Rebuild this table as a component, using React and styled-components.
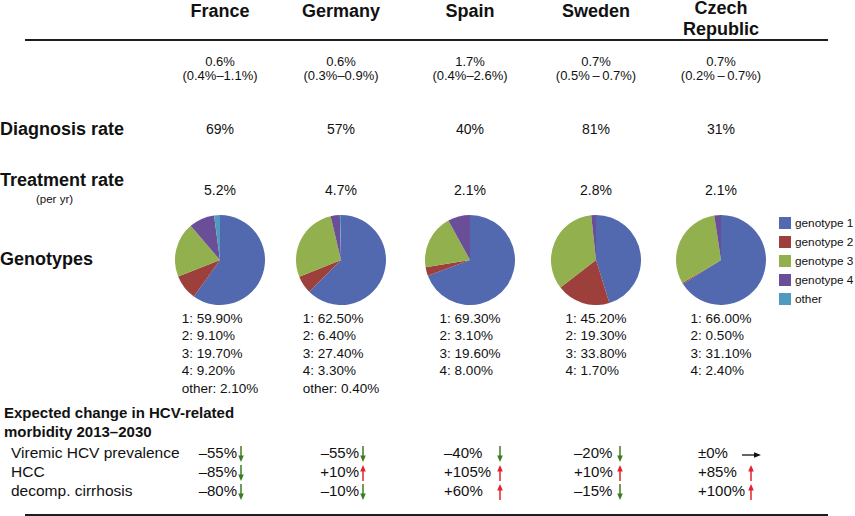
import React from "react";
import styled, { createGlobalStyle } from "styled-components";

const GlobalStyle = createGlobalStyle`
  html, body {
    margin: 0;
    padding: 0;
    background: #ffffff;
  }
  body {
    font-family: "Liberation Sans", Arial, sans-serif;
    color: #111;
  }
`;

const COLS = "158px 124px 118px 140px 112px 138px 1fr";

const COLORS = ["#5269af", "#9d403c", "#93b04e", "#6a4e97", "#4f9bc0"];

const Page = styled.div`
  width: 855px;
  height: 516px;
  overflow: hidden;
  display: flex;
  flex-direction: column;
`;

const Row = styled.div`
  display: grid;
  grid-template-columns: ${COLS};
  align-items: start;
  height: ${(p) => (p.$h ? `${p.$h}px` : "auto")};
  padding-top: ${(p) => p.$pt || 0}px;
  box-sizing: border-box;
`;

const CountryHead = styled.div`
  text-align: center;
  font-size: 18px;
  font-weight: bold;
  line-height: ${(p) => (p.$two ? "21px" : "22px")};
  margin-top: ${(p) => (p.$two ? "-2px" : "0")};
`;

const Rule = styled.div`
  height: ${(p) => p.$h || 2}px;
  margin: ${(p) => p.$mt || 0}px 27px 0 25px;
  background: #1e1e1e;
  flex-shrink: 0;
`;

const RowLabel = styled.div`
  font-size: 18px;
  font-weight: bold;
  line-height: 22px;
  padding-top: ${(p) => p.$pt || 0}px;
  white-space: nowrap;
`;

const SubNote = styled.div`
  font-size: 11.5px;
  font-weight: normal;
  line-height: 12px;
  margin-top: 2px;
  padding-left: 36px;
`;

const Value = styled.div`
  text-align: center;
  font-size: ${(p) => p.$fs || 14}px;
  line-height: ${(p) => p.$lh || 22}px;
  padding-top: ${(p) => p.$pt || 0}px;
  white-space: nowrap;
`;

const PieCell = styled.div`
  display: flex;
  flex-direction: column;
  align-items: center;
`;

const GenoList = styled.div`
  margin-top: 5px;
  font-size: 13.5px;
  line-height: 17.5px;
  text-align: left;
  white-space: nowrap;
`;

const Legend = styled.div`
  margin: -1.5px 0 0 -11px;
  display: flex;
  flex-direction: column;
`;

const LegendItem = styled.div`
  display: flex;
  align-items: center;
  gap: 4px;
  height: 19px;
  font-size: 11.8px;
  white-space: nowrap;
`;

const Swatch = styled.span`
  width: 12px;
  height: 12px;
  flex-shrink: 0;
  background: ${(p) => p.$c};
`;

const SectionTitle = styled.div`
  margin-top: 6px;
  padding-left: 4px;
  font-size: 15px;
  font-weight: bold;
  line-height: 19px;
`;

const ChangeBlock = styled.div`
  margin-top: 2px;
  display: flex;
  flex-direction: column;
`;

const ChangeRow = styled.div`
  display: grid;
  grid-template-columns: ${COLS};
  height: 19px;
  font-size: 15px;
  line-height: 19px;
`;

const ChangeLabel = styled.div`
  padding-left: 11px;
  font-size: 15.5px;
  white-space: nowrap;
`;

const ChangeCell = styled.div`
  display: flex;
  align-items: flex-start;
  padding-left: ${(p) => p.$pad}px;
`;

const ChangeVal = styled.span`
  width: ${(p) => p.$w}px;
  text-align: ${(p) => p.$align};
  white-space: nowrap;
`;

const ArrowSvg = styled.svg`
  flex-shrink: 0;
  margin-top: ${(p) => p.$mt}px;
  margin-left: ${(p) => p.$ml || 0}px;
`;

function Arrow({ dir }) {
  if (dir === "right") {
    return (
      <ArrowSvg width="20" height="8" viewBox="0 0 20 8" $mt={7.5} $ml={-5}>
        <line x1="0" y1="4" x2="14" y2="4" stroke="#111" strokeWidth="1.3" />
        <polygon points="12,1.2 19,4 12,6.8" fill="#111" />
      </ArrowSvg>
    );
  }
  const up = dir === "up";
  const color = up ? "#e3232b" : "#3d7d1f";
  return (
    <ArrowSvg width="8" height="16" viewBox="0 0 8 16" $mt={2.5}>
      {up ? (
        <>
          <line x1="4" y1="5" x2="4" y2="16" stroke={color} strokeWidth="1.5" />
          <polygon points="1.2,6.5 4,0 6.8,6.5" fill={color} />
        </>
      ) : (
        <>
          <line x1="4" y1="0" x2="4" y2="11" stroke={color} strokeWidth="1.5" />
          <polygon points="1.2,9.5 4,16 6.8,9.5" fill={color} />
        </>
      )}
    </ArrowSvg>
  );
}

function slicePath(c, r, f0, f1) {
  const a0 = f0 * Math.PI * 2;
  const a1 = f1 * Math.PI * 2;
  const x0 = c + r * Math.sin(a0);
  const y0 = c - r * Math.cos(a0);
  const x1 = c + r * Math.sin(a1);
  const y1 = c - r * Math.cos(a1);
  const large = f1 - f0 > 0.5 ? 1 : 0;
  return `M ${c} ${c} L ${x0} ${y0} A ${r} ${r} 0 ${large} 1 ${x1} ${y1} Z`;
}

function Pie({ values }) {
  const total = values.reduce((a, b) => a + b, 0);
  let acc = 0;
  return (
    <svg width="90" height="90" viewBox="0 0 90 90">
      {values.map((v, i) => {
        const f0 = acc / total;
        acc += v;
        const f1 = acc / total;
        return <path key={i} d={slicePath(45, 45, f0, f1)} fill={COLORS[i]} />;
      })}
    </svg>
  );
}

const countries = [
  {
    name: "France",
    prev: "0.6%",
    range: "(0.4%–1.1%)",
    diag: "69%",
    treat: "5.2%",
    geno: [59.9, 9.1, 19.7, 9.2, 2.1],
    other: "2.10%",
    change: { pad: 19, w: 60, align: "right", v: ["–55%", "–85%", "–80%"], d: ["down", "down", "down"] },
  },
  {
    name: "Germany",
    prev: "0.6%",
    range: "(0.3%–0.9%)",
    diag: "57%",
    treat: "4.7%",
    geno: [62.5, 6.4, 27.4, 3.3, 0.4],
    other: "0.40%",
    change: { pad: 17, w: 60, align: "right", v: ["–55%", "+10%", "–10%"], d: ["down", "up", "down"] },
  },
  {
    name: "Spain",
    prev: "1.7%",
    range: "(0.4%–2.6%)",
    diag: "40%",
    treat: "2.1%",
    geno: [69.3, 3.1, 19.6, 8.0],
    change: { pad: 44, w: 52, align: "left", v: ["–40%", "+105%", "+60%"], d: ["down", "up", "up"] },
  },
  {
    name: "Sweden",
    prev: "0.7%",
    range: "(0.5%\u2009–\u20090.7%)",
    diag: "81%",
    treat: "2.8%",
    geno: [45.2, 19.3, 33.8, 1.7],
    change: { pad: 34, w: 42, align: "left", v: ["–20%", "+10%", "–15%"], d: ["down", "up", "down"] },
  },
  {
    name: "Czech Republic",
    two: true,
    prev: "0.7%",
    range: "(0.2%\u2009–\u20090.7%)",
    diag: "31%",
    treat: "2.1%",
    geno: [66.0, 0.5, 31.1, 2.4],
    change: { pad: 46, w: 49, align: "left", v: ["±0%", "+85%", "+100%"], d: ["right", "up", "up"] },
  },
];

const fmt = (n) => `${n.toFixed(2)}%`;

const changeLabels = ["Viremic HCV prevalence", "HCC", "decomp. cirrhosis"];

const legend = ["genotype 1", "genotype 2", "genotype 3", "genotype 4", "other"];

export default function App() {
  return (
    <Page>
      <GlobalStyle />
      <Row $h={39}>
        <div />
        {countries.map((c) => (
          <CountryHead key={c.name} $two={c.two}>
            {c.two ? (
              <>
                Czech
                <br />
                Republic
              </>
            ) : (
              c.name
            )}
          </CountryHead>
        ))}
      </Row>
      <Rule $h={1.6} />

      <Row $h={77} $pt={14}>
        <div />
        {countries.map((c) => (
          <Value key={c.name} $fs={13} $lh={14.5}>
            {c.prev}
            <br />
            {c.range}
          </Value>
        ))}
      </Row>

      <Row $h={51}>
        <RowLabel>Diagnosis rate</RowLabel>
        {countries.map((c) => (
          <Value key={c.name}>{c.diag}</Value>
        ))}
      </Row>

      <Row $h={46}>
        <RowLabel>
          Treatment rate
          <SubNote>(per yr)</SubNote>
        </RowLabel>
        {countries.map((c) => (
          <Value key={c.name} $pt={10}>
            {c.treat}
          </Value>
        ))}
      </Row>

      <Row>
        <RowLabel $pt={33}>Genotypes</RowLabel>
        {countries.map((c) => (
          <PieCell key={c.name}>
            <Pie values={c.geno} />
            <GenoList>
              {c.geno.slice(0, 4).map((g, i) => (
                <div key={i}>
                  {i + 1}: {fmt(g)}
                </div>
              ))}
              {c.other && <div>other: {c.other}</div>}
            </GenoList>
          </PieCell>
        ))}
        <Legend>
          {legend.map((l, i) => (
            <LegendItem key={l}>
              <Swatch $c={COLORS[i]} />
              {l}
            </LegendItem>
          ))}
        </Legend>
      </Row>

      <SectionTitle>
        Expected change in HCV-related
        <br />
        morbidity 2013–2030
      </SectionTitle>

      <ChangeBlock>
        {changeLabels.map((label, r) => (
          <ChangeRow key={label}>
            <ChangeLabel>{label}</ChangeLabel>
            {countries.map((c) => (
              <ChangeCell key={c.name} $pad={c.change.pad}>
                <ChangeVal $w={c.change.w} $align={c.change.align}>
                  {c.change.v[r]}
                </ChangeVal>
                <Arrow dir={c.change.d[r]} />
              </ChangeCell>
            ))}
          </ChangeRow>
        ))}
      </ChangeBlock>

      <Rule $h={2} $mt={13.5} />
    </Page>
  );
}
